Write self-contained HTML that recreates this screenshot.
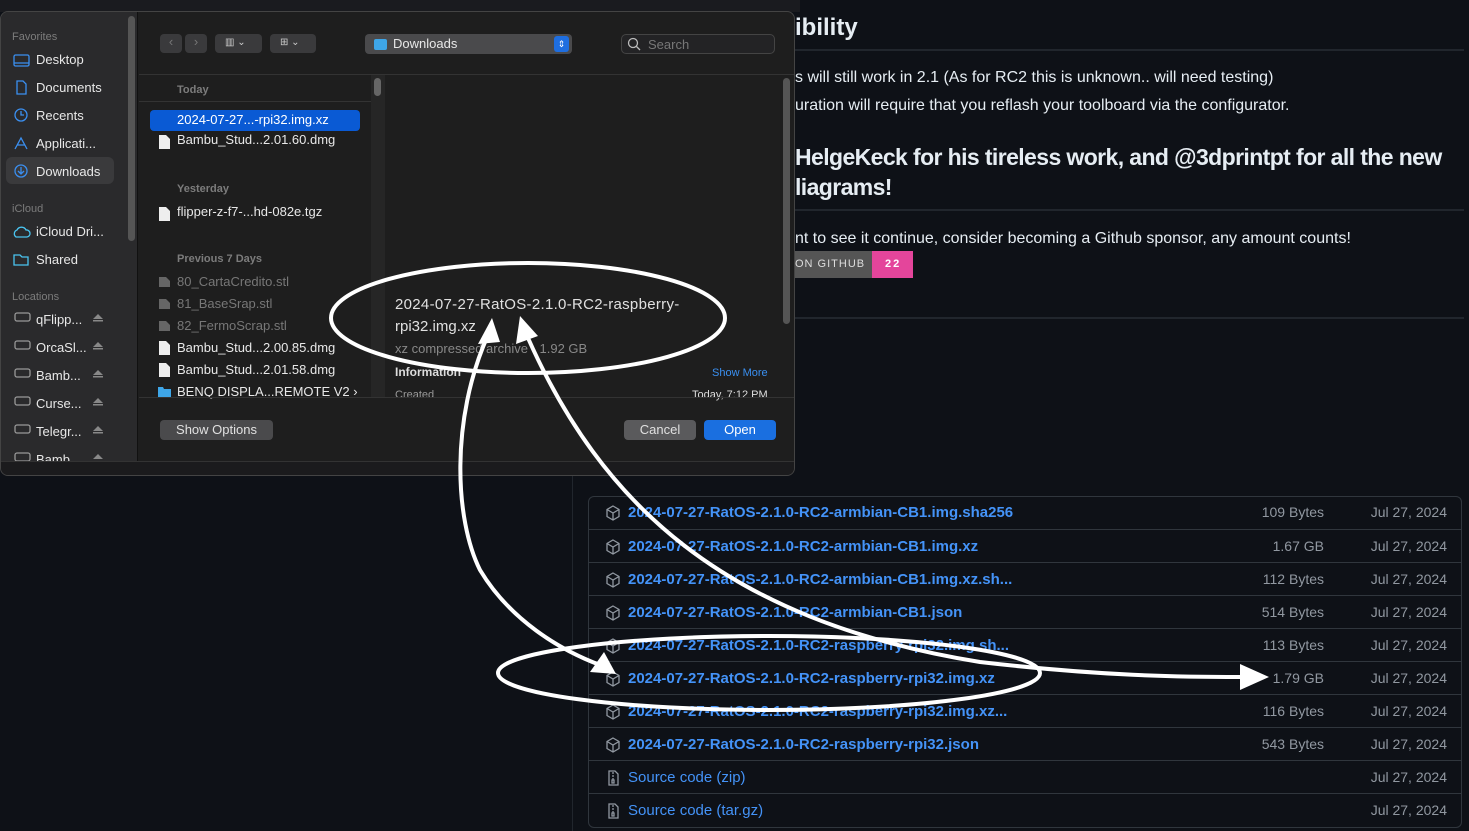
<!DOCTYPE html>
<html><head><meta charset="utf-8"><style>
*{margin:0;padding:0;box-sizing:border-box}
body{width:1469px;height:831px;overflow:hidden;background:#0e1117;font-family:"Liberation Sans",sans-serif;position:relative}
.a{position:absolute;white-space:nowrap}
.gh{color:#e6edf3}
.hr{position:absolute;left:795px;right:5px;height:2px;background:#21262d}
.sb{color:#e8e8e8;font-size:13px}
.sh{color:#7c7c7c;font-size:11px}
.fl{color:#e8e8e8;font-size:13px}
.row{position:absolute;left:588px;width:874px;height:33px;border-top:1px solid #30363d}
.row .n{position:absolute;left:40px;top:8px;color:#4493f8;font-size:15px;font-weight:bold}
.row .s{position:absolute;right:138px;top:8px;color:#9198a1;font-size:14px}
.row .d{position:absolute;right:15px;top:8px;color:#9198a1;font-size:14px}
.row svg{position:absolute;left:17px;top:9px}
</style></head><body>
<div class="a gh" style="left:795px;top:14px;font-size:24px;font-weight:bold">ibility</div>
<div class="hr" style="top:49px"></div>
<div class="a gh" style="left:795px;top:69px;font-size:16px">s will still work in 2.1 (As for RC2 this is unknown.. will need testing)</div>
<div class="a gh" style="left:795px;top:97px;font-size:16px">uration will require that you reflash your toolboard via the configurator.</div>
<div class="a gh" style="left:795px;top:144px;font-size:23px;font-weight:bold;letter-spacing:-0.6px">HelgeKeck for his tireless work, and @3dprintpt for all the new</div>
<div class="a gh" style="left:795px;top:174px;font-size:23px;font-weight:bold;letter-spacing:-0.6px">liagrams!</div>
<div class="hr" style="top:209px"></div>
<div class="a gh" style="left:795px;top:230px;font-size:16px">nt to see it continue, consider becoming a Github sponsor, any amount counts!</div>
<div class="a" style="left:795px;top:251px;width:77px;height:27px;background:#555;color:#ddd;font-size:11px;letter-spacing:1px;padding:7px 0 0 0">ON GITHUB</div>
<div class="a" style="left:872px;top:251px;width:41px;height:27px;background:#e4459b;color:#fff;font-size:11px;font-weight:bold;letter-spacing:2px;padding:7px 0 0 13px">22</div>
<div class="hr" style="top:317px"></div>
<div class="a" style="left:572px;top:476px;width:1px;height:355px;background:#21262d"></div>
<div class="a" style="left:588px;top:496px;width:874px;height:332px;border:1px solid #30363d;border-radius:6px"></div>
<div class="a" style="left:0;top:0;width:800px;height:12px;background:#1a1b1f"></div>
<div class="a" style="left:0;top:11px;width:795px;height:465px;background:#1e1e1e;border:1px solid #444;border-radius:8px;overflow:hidden">
 <div class="a" style="left:0;top:0;width:137px;height:450px;background:#2a2a2c;border-right:1px solid #111"></div>
 <div class="a" style="left:127px;top:4px;width:7px;height:225px;background:#555;border-radius:4px"></div>
 <div class="a sh" style="left:11px;top:19px">Favorites</div>
 <div class="a" style="left:5px;top:145px;width:108px;height:27px;background:#3a3a3c;border-radius:6px"></div>
 <div class="a sb" style="left:35px;top:40px">Desktop</div>
 <div class="a sb" style="left:35px;top:68px">Documents</div>
 <div class="a sb" style="left:35px;top:96px">Recents</div>
 <div class="a sb" style="left:35px;top:124px">Applicati...</div>
 <div class="a sb" style="left:35px;top:152px">Downloads</div>
 <div class="a sh" style="left:11px;top:191px">iCloud</div>
 <div class="a sb" style="left:35px;top:212px">iCloud Dri...</div>
 <div class="a sb" style="left:35px;top:240px">Shared</div>
 <div class="a sh" style="left:11px;top:279px">Locations</div>
 <div class="a sb" style="left:35px;top:300px">qFlipp...</div>
 <div class="a sb" style="left:35px;top:328px">OrcaSl...</div>
 <div class="a sb" style="left:35px;top:356px">Bamb...</div>
 <div class="a sb" style="left:35px;top:384px">Curse...</div>
 <div class="a sb" style="left:35px;top:412px">Telegr...</div>
 <div class="a sb" style="left:35px;top:440px">Bamb...</div>
 <svg class="a" style="left:10px;top:40px" width="110" height="420" fill="none" stroke="#3b8ff0" stroke-width="1.3">
  <rect x="3" y="3" width="15" height="11" rx="1.5"/><line x1="3" y1="11" x2="18" y2="11"/>
  <path d="M6 29h6l3 3v10H6z"/>
  <circle cx="10" cy="63" r="6"/><path d="M10 59v4h3"/>
  <path d="M4 97l6-11 6 11M6 93h8"/>
  <circle cx="10" cy="119" r="6"/><path d="M10 115v7M7 119l3 3 3-3"/>
  <g transform="translate(0,-9)">
  <path d="M5 194a4 4 0 0 1 1-7 5 5 0 0 1 9 0 3.5 3.5 0 0 1 1 7z" stroke="#4ac4f0"/>
  <path d="M3 212h6l2 2h6v8H3z" stroke="#4ac4f0"/>
  </g>
  <g transform="translate(0,-7)">
  <g stroke="#999"><rect x="4" y="268" width="15" height="8" rx="2"/><rect x="4" y="296" width="15" height="8" rx="2"/><rect x="4" y="324" width="15" height="8" rx="2"/><rect x="4" y="352" width="15" height="8" rx="2"/><rect x="4" y="380" width="15" height="8" rx="2"/><rect x="4" y="408" width="15" height="8" rx="2"/></g>
  <g fill="#888" stroke="none"><path d="M82 274l5-5 5 5zM82 302l5-5 5 5zM82 330l5-5 5 5zM82 358l5-5 5 5zM82 386l5-5 5 5zM82 414l5-5 5 5z"/><rect x="82" y="275" width="10" height="1.5"/><rect x="82" y="303" width="10" height="1.5"/><rect x="82" y="331" width="10" height="1.5"/><rect x="82" y="359" width="10" height="1.5"/><rect x="82" y="387" width="10" height="1.5"/></g>
  </g>
 </svg>
 <div class="a" style="left:159px;top:22px;width:22px;height:19px;background:#3a3a3c;border-radius:4px;color:#777;font-size:13px;text-align:center">‹</div>
 <div class="a" style="left:184px;top:22px;width:22px;height:19px;background:#3a3a3c;border-radius:4px;color:#777;font-size:13px;text-align:center">›</div>
 <div class="a" style="left:214px;top:22px;width:47px;height:19px;background:#3a3a3c;border-radius:4px;color:#ccc;font-size:10px;padding:3px 0 0 10px">▥ ⌄</div>
 <div class="a" style="left:269px;top:22px;width:46px;height:19px;background:#3a3a3c;border-radius:4px;color:#ccc;font-size:10px;padding:3px 0 0 10px">⊞ ⌄</div>
 <div class="a" style="left:364px;top:22px;width:207px;height:20px;background:#4a4a4c;border-radius:4px"></div>
 <div class="a" style="left:373px;top:27px;width:13px;height:11px;background:#3ea6e8;border-radius:2px"></div>
 <div class="a" style="left:392px;top:24px;color:#e8e8e8;font-size:13px">Downloads</div>
 <div class="a" style="left:553px;top:24px;width:15px;height:16px;background:#1e6ee0;border-radius:3px;color:#fff;font-size:9px;text-align:center;line-height:16px">⇕</div>
 <div class="a" style="left:620px;top:22px;width:154px;height:20px;border:1px solid #444;border-radius:5px;background:#232325"></div>
 <svg class="a" style="left:626px;top:25px" width="14" height="14" fill="none" stroke="#bbb" stroke-width="1.3"><circle cx="6" cy="6" r="4.5"/><path d="M9.5 9.5l3.5 3.5"/></svg>
 <div class="a" style="left:647px;top:25px;color:#777;font-size:13px">Search</div>
 <div class="a" style="left:138px;top:62px;width:657px;height:1px;background:#333"></div>
 <div class="a" style="left:138px;top:63px;width:232px;height:322px;background:#1e1e1e"></div>
 <div class="a" style="left:138px;top:89px;width:232px;height:1px;background:#333"></div>
 <div class="a" style="left:370px;top:63px;width:14px;height:322px;background:#262626"></div>
 <div class="a" style="left:373px;top:66px;width:7px;height:18px;background:#666;border-radius:4px"></div>
 <div class="a sh" style="left:176px;top:72px;font-weight:bold">Today</div>
 <div class="a" style="left:149px;top:98px;width:210px;height:21px;background:#0a5ad4;border-radius:4px"></div>
 <div class="a fl" style="left:176px;top:100px;color:#fff">2024-07-27...-rpi32.img.xz</div>
 <div class="a fl" style="left:176px;top:120px">Bambu_Stud...2.01.60.dmg</div>
 <div class="a sh" style="left:176px;top:171px;font-weight:bold">Yesterday</div>
 <div class="a fl" style="left:176px;top:192px">flipper-z-f7-...hd-082e.tgz</div>
 <div class="a sh" style="left:176px;top:241px;font-weight:bold">Previous 7 Days</div>
 <div class="a fl" style="left:176px;top:262px;color:#777">80_CartaCredito.stl</div>
 <div class="a fl" style="left:176px;top:284px;color:#777">81_BaseSrap.stl</div>
 <div class="a fl" style="left:176px;top:306px;color:#777">82_FermoScrap.stl</div>
 <div class="a fl" style="left:176px;top:328px">Bambu_Stud...2.00.85.dmg</div>
 <div class="a fl" style="left:176px;top:350px">Bambu_Stud...2.01.58.dmg</div>
 <div class="a fl" style="left:176px;top:372px">BENQ DISPLA...REMOTE V2 ›</div>
 <svg class="a" style="left:156px;top:121px" width="16" height="265">
  <g fill="#eee"><path d="M2 2h7l4 4v10H2z"/><path d="M2 74h7l4 4v10H2z"/><path d="M2 208h7l4 4v10H2z"/><path d="M2 230h7l4 4v10H2z"/></g>
  <g fill="#666"><path d="M2 144h7l4 4v6H2z"/><path d="M2 166h7l4 4v6H2z"/><path d="M2 188h7l4 4v6H2z"/></g>
  <path d="M1 254h5l1 2h7v9H1z" fill="#3ea6e8"/>
 </svg>
 <div class="a" style="left:782px;top:66px;width:7px;height:246px;background:#555;border-radius:4px"></div>
 <div class="a" style="left:394px;top:284px;color:#e0e0e0;font-size:15px;letter-spacing:0.3px">2024-07-27-RatOS-2.1.0-RC2-raspberry-</div>
 <div class="a" style="left:394px;top:306px;color:#e0e0e0;font-size:15px">rpi32.img.xz</div>
 <div class="a" style="left:394px;top:329px;color:#888;font-size:13px">xz compressed archive - 1.92 GB</div>
 <div class="a" style="left:394px;top:353px;color:#ddd;font-size:12px;font-weight:bold">Information</div>
 <div class="a" style="left:711px;top:355px;color:#3a8ff0;font-size:11px">Show More</div>
 <div class="a" style="left:394px;top:377px;color:#999;font-size:11px">Created</div>
 <div class="a" style="left:691px;top:377px;color:#ddd;font-size:11px">Today, 7:12 PM</div>
 <div class="a" style="left:138px;top:385px;width:657px;height:1px;background:#333"></div>
 <div class="a" style="left:159px;top:408px;width:113px;height:20px;background:#4a4a4c;border-radius:4px;color:#e0e0e0;font-size:13px;text-align:center;line-height:20px">Show Options</div>
 <div class="a" style="left:623px;top:408px;width:72px;height:20px;background:#5a5a5c;border-radius:4px;color:#e0e0e0;font-size:13px;text-align:center;line-height:20px">Cancel</div>
 <div class="a" style="left:703px;top:408px;width:72px;height:20px;background:#1a6fe0;border-radius:4px;color:#fff;font-size:13px;text-align:center;line-height:20px">Open</div>
 <div class="a" style="left:0;top:449px;width:795px;height:16px;background:#1b1b1d;border-top:1px solid #333"></div>
</div>
<div class="row" style="top:496px;border-top:none"><svg width="16" height="16" fill="none" stroke="#9198a1" stroke-width="1.3"><path d="M8 1l6 3.5v7L8 15l-6-3.5v-7zM2 4.5L8 8l6-3.5M8 8v7"/></svg><span class="n">2024-07-27-RatOS-2.1.0-RC2-armbian-CB1.img.sha256</span><span class="s">109 Bytes</span><span class="d">Jul 27, 2024</span></div>
<div class="row" style="top:529px"><svg width="16" height="16" fill="none" stroke="#9198a1" stroke-width="1.3"><path d="M8 1l6 3.5v7L8 15l-6-3.5v-7zM2 4.5L8 8l6-3.5M8 8v7"/></svg><span class="n">2024-07-27-RatOS-2.1.0-RC2-armbian-CB1.img.xz</span><span class="s">1.67 GB</span><span class="d">Jul 27, 2024</span></div>
<div class="row" style="top:562px"><svg width="16" height="16" fill="none" stroke="#9198a1" stroke-width="1.3"><path d="M8 1l6 3.5v7L8 15l-6-3.5v-7zM2 4.5L8 8l6-3.5M8 8v7"/></svg><span class="n">2024-07-27-RatOS-2.1.0-RC2-armbian-CB1.img.xz.sh...</span><span class="s">112 Bytes</span><span class="d">Jul 27, 2024</span></div>
<div class="row" style="top:595px"><svg width="16" height="16" fill="none" stroke="#9198a1" stroke-width="1.3"><path d="M8 1l6 3.5v7L8 15l-6-3.5v-7zM2 4.5L8 8l6-3.5M8 8v7"/></svg><span class="n">2024-07-27-RatOS-2.1.0-RC2-armbian-CB1.json</span><span class="s">514 Bytes</span><span class="d">Jul 27, 2024</span></div>
<div class="row" style="top:628px"><svg width="16" height="16" fill="none" stroke="#9198a1" stroke-width="1.3"><path d="M8 1l6 3.5v7L8 15l-6-3.5v-7zM2 4.5L8 8l6-3.5M8 8v7"/></svg><span class="n">2024-07-27-RatOS-2.1.0-RC2-raspberry-rpi32.img.sh...</span><span class="s">113 Bytes</span><span class="d">Jul 27, 2024</span></div>
<div class="row" style="top:661px"><svg width="16" height="16" fill="none" stroke="#9198a1" stroke-width="1.3"><path d="M8 1l6 3.5v7L8 15l-6-3.5v-7zM2 4.5L8 8l6-3.5M8 8v7"/></svg><span class="n">2024-07-27-RatOS-2.1.0-RC2-raspberry-rpi32.img.xz</span><span class="s">1.79 GB</span><span class="d">Jul 27, 2024</span></div>
<div class="row" style="top:694px"><svg width="16" height="16" fill="none" stroke="#9198a1" stroke-width="1.3"><path d="M8 1l6 3.5v7L8 15l-6-3.5v-7zM2 4.5L8 8l6-3.5M8 8v7"/></svg><span class="n">2024-07-27-RatOS-2.1.0-RC2-raspberry-rpi32.img.xz...</span><span class="s">116 Bytes</span><span class="d">Jul 27, 2024</span></div>
<div class="row" style="top:727px"><svg width="16" height="16" fill="none" stroke="#9198a1" stroke-width="1.3"><path d="M8 1l6 3.5v7L8 15l-6-3.5v-7zM2 4.5L8 8l6-3.5M8 8v7"/></svg><span class="n">2024-07-27-RatOS-2.1.0-RC2-raspberry-rpi32.json</span><span class="s">543 Bytes</span><span class="d">Jul 27, 2024</span></div>
<div class="row" style="top:760px"><svg width="16" height="16" fill="none" stroke="#9198a1" stroke-width="1.3"><path d="M4 1h6l3 3v11H4zM8 2v2M8 5v2M8 8v2M7 10h2v3H7z"/></svg><span class="n" style="font-weight:normal">Source code (zip)</span><span class="d">Jul 27, 2024</span></div>
<div class="row" style="top:793px"><svg width="16" height="16" fill="none" stroke="#9198a1" stroke-width="1.3"><path d="M4 1h6l3 3v11H4zM8 2v2M8 5v2M8 8v2M7 10h2v3H7z"/></svg><span class="n" style="font-weight:normal">Source code (tar.gz)</span><span class="d">Jul 27, 2024</span></div>
<svg class="a" style="left:0;top:0" width="1469" height="831" fill="none" stroke="#fff" stroke-width="4">
 <ellipse cx="528" cy="318" rx="197" ry="55"/>
 <ellipse cx="769" cy="673" rx="271" ry="37"/>
 <path d="M488 335C450 420 455 520 480 570C510 620 560 650 600 665"/>
 <path d="M528 338C600 500 720 620 980 662C1100 676 1180 677 1240 677"/>
 <g fill="#fff" stroke="none">
  <path d="M492 318L478 344L500 342z"/>
  <path d="M520 316L516 344L538 336z"/>
  <path d="M616 674L590 672L604 652z"/>
  <path d="M1269 677L1240 664L1240 690z"/>
 </g>
</svg>
</body></html>
